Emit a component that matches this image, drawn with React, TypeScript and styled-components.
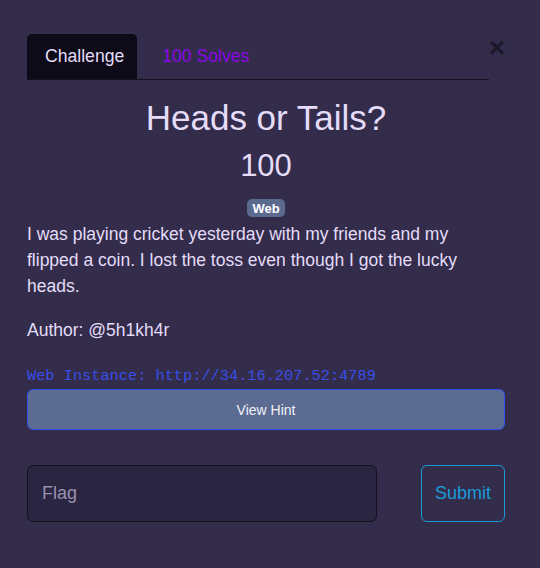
import styled, { createGlobalStyle } from "styled-components";

const GlobalStyle = createGlobalStyle`
  html, body {
    margin: 0;
    padding: 0;
    background: #332c4b;
  }
  body {
    font-family: "Liberation Sans", Arial, sans-serif;
  }
`;

function App() {
  return (
    <Modal>
      <GlobalStyle />
      <Header>
        <Tabs>
          <Tab $active>Challenge</Tab>
          <Tab>100 Solves</Tab>
        </Tabs>
        <CloseButton aria-label="Close">×</CloseButton>
      </Header>

      <Title>Heads or Tails?</Title>
      <Points>100</Points>
      <TagRow>
        <Badge>Web</Badge>
      </TagRow>

      <Description>
        I was playing cricket yesterday with my friends and my flipped a coin.
        I lost the toss even though I got the lucky heads.
      </Description>
      <Description>Author: @5h1kh4r</Description>

      <Instance>Web Instance: http://34.16.207.52:4789</Instance>
      <HintButton>View Hint</HintButton>

      <FlagRow>
        <FlagInput placeholder="Flag" />
        <SubmitButton>Submit</SubmitButton>
      </FlagRow>
    </Modal>
  );
}

// -------------styled components-------------------
const Modal = styled.div`
  width: 540px;
  height: 568px;
  box-sizing: border-box;
  padding: 34px 35px 0 27px;
  color: #e4dcf8;
`;

const Header = styled.div`
  display: flex;
  align-items: flex-start;
`;

const Tabs = styled.div`
  display: flex;
  width: 462px;
  border-bottom: 1px solid #15111f;
`;

const Tab = styled.div<{ $active?: boolean }>`
  height: 45px;
  box-sizing: border-box;
  display: flex;
  align-items: center;
  font-size: 17.6px;
  border-radius: 5px 5px 0 0;
  background: ${(p) => (p.$active ? "#0d0b17" : "transparent")};
  color: ${(p) => (p.$active ? "#e4dcf8" : "#8b06e6")};
  padding-left: ${(p) => (p.$active ? "18px" : "25px")};
  padding-right: ${(p) => (p.$active ? "13px" : "19px")};
`;

const CloseButton = styled.button`
  margin-left: auto;
  margin-top: 2px;
  border: none;
  background: none;
  padding: 0;
  font-family: "Liberation Sans", Arial, sans-serif;
  font-size: 28px;
  font-weight: bold;
  line-height: 24px;
  color: #1c1828;
`;

const Title = styled.h1`
  margin: 18px 0 0;
  text-align: center;
  font-size: 35px;
  font-weight: normal;
  line-height: 40px;
`;

const Points = styled.h2`
  margin: 10px 0 0;
  text-align: center;
  font-size: 31px;
  font-weight: normal;
  line-height: 36px;
`;

const TagRow = styled.div`
  display: flex;
  justify-content: center;
  margin-top: 15px;
`;

const Badge = styled.span`
  background: #5b6a8f;
  color: #ffffff;
  font-size: 13px;
  font-weight: bold;
  padding: 2px 5px 1px;
  border-radius: 5px;
  line-height: 15px;
`;

const Description = styled.p`
  margin: 4px 0 18px;
  font-size: 17.5px;
  line-height: 26px;
  width: 462px;
  & + & {
    margin-top: 0;
    margin-bottom: 17px;
  }
`;

const Instance = styled.div`
  margin-top: 24px;
  font-family: "Liberation Mono", "Courier New", monospace;
  font-size: 15.3px;
  color: #3a4fe8;
  line-height: 18px;
`;

const HintButton = styled.button`
  display: block;
  width: 478px;
  height: 41px;
  margin-top: 4px;
  background: #5b6b91;
  border: 1px solid #2f4fe9;
  border-radius: 6px;
  color: #f2f0fa;
  font-family: "Liberation Sans", Arial, sans-serif;
  font-size: 14px;
`;

const FlagRow = styled.div`
  display: flex;
  justify-content: space-between;
  width: 478px;
  margin-top: 35px;
`;

const FlagInput = styled.input`
  width: 350px;
  height: 57px;
  box-sizing: border-box;
  background: #2a2540;
  border: 1px solid #15111f;
  border-radius: 6px;
  padding: 0 14px;
  font-family: "Liberation Sans", Arial, sans-serif;
  font-size: 18px;
  color: #e4dcf8;
  &::placeholder {
    color: #9a90ae;
  }
`;

const SubmitButton = styled.button`
  width: 84px;
  height: 57px;
  background: transparent;
  border: 1px solid #1a9bd8;
  border-radius: 6px;
  color: #1a9bd8;
  font-family: "Liberation Sans", Arial, sans-serif;
  font-size: 18px;
`;

export default App;
